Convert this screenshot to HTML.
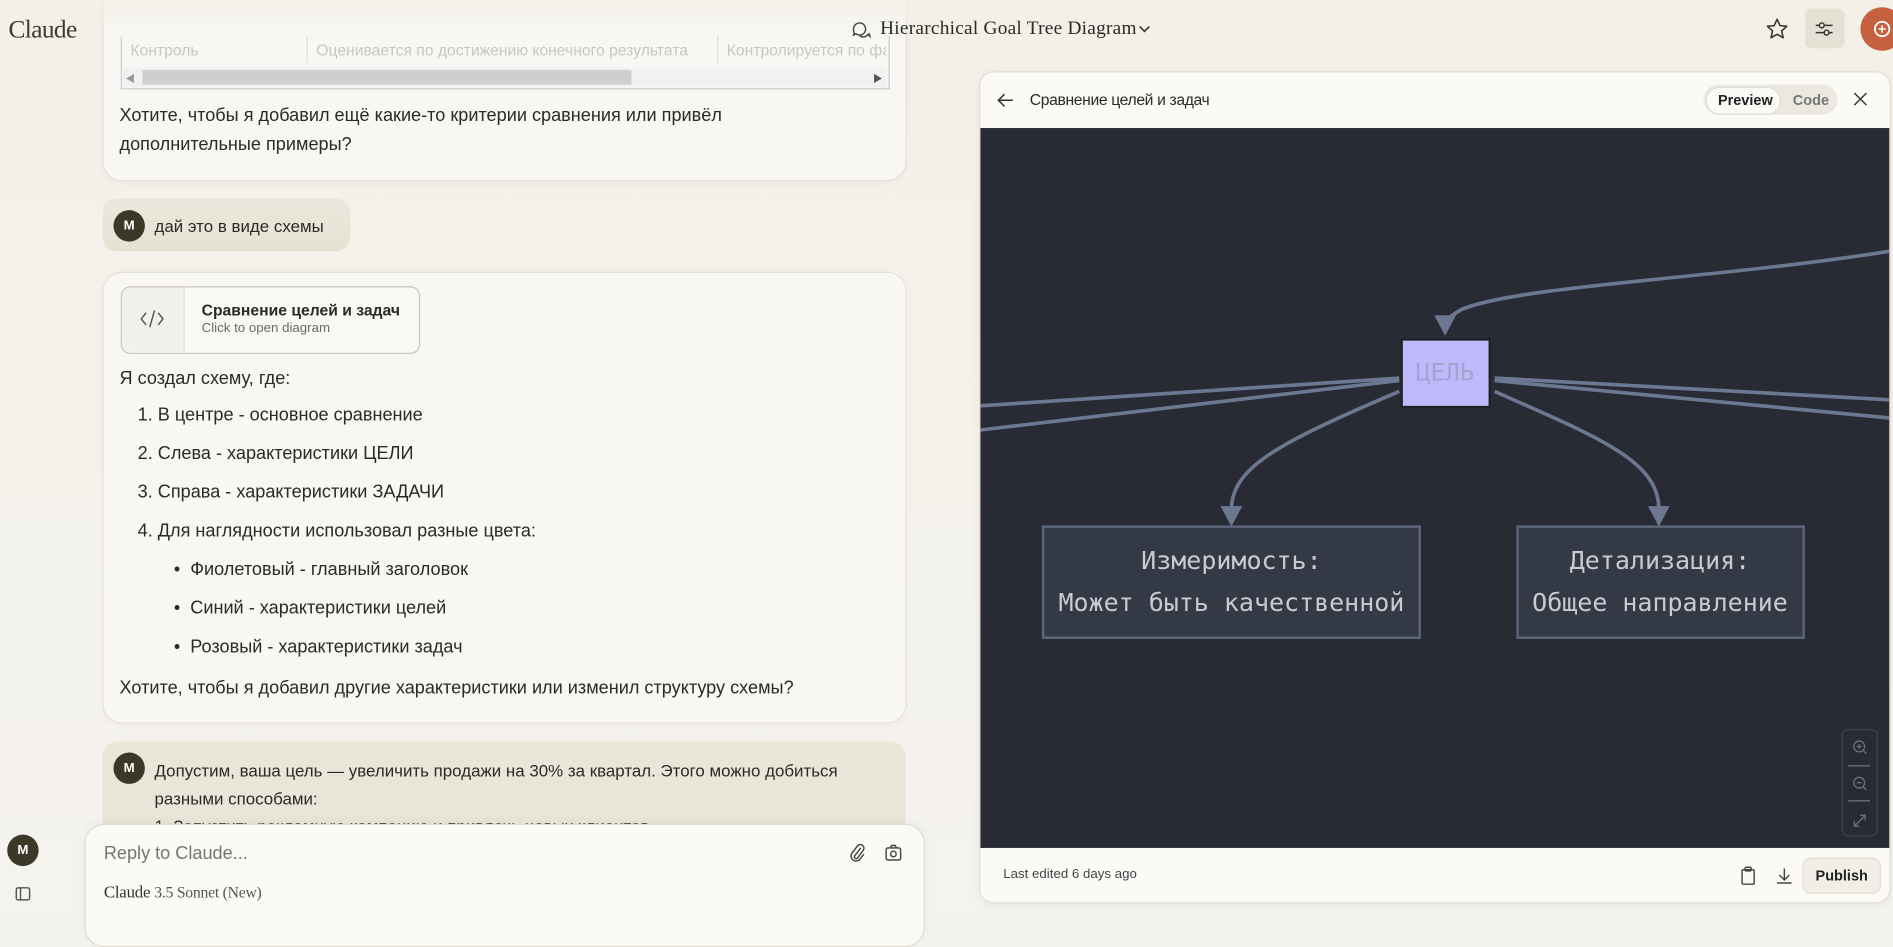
<!DOCTYPE html>
<html><head><meta charset="utf-8">
<style>
html,body{margin:0;padding:0;width:1893px;height:918px;overflow:hidden;background:#f4f2ec;}
#w{position:absolute;left:0;top:0;width:1568px;height:760px;transform:scale(1.20727,1.2079);transform-origin:0 0;font-family:"Liberation Sans","Noto Sans CJK SC",sans-serif;color:#2b2a26;background:linear-gradient(#f3f0e8,#f5f3ee);}
.a{position:absolute;}
.serif{font-family:"Liberation Serif","DejaVu Serif",serif;}
.t{font-size:15px;white-space:nowrap;}
.card{background:#f8f7f3;border:1px solid #e6e2d8;border-radius:16px;box-shadow:0 2px 6px rgba(0,0,0,0.03);}
.av{width:26px;height:26px;border-radius:13px;background:#3b3828;color:#fff;font-size:11px;font-weight:bold;text-align:center;line-height:26px;}
.z{z-index:5;}
</style></head><body><div id="w">
<!-- card 1 -->
<div class="a card" style="left:85px;top:-20px;width:664px;height:168px;"></div>
<div class="a" style="left:85px;top:0;width:666px;height:30px;background:linear-gradient(#f3f0e8,rgba(243,240,232,0))"></div>
<div class="a" style="left:100px;top:30px;width:635px;height:43px;border:1px solid #ccc;border-top:none;background:#f8f7f3"></div>
<div class="a" style="left:108px;top:34px;font-size:13px;color:#c9c7c0">Контроль</div>
<div class="a" style="left:254px;top:30px;width:1px;height:22px;background:#ddd"></div>
<div class="a" style="left:262px;top:34px;font-size:13px;color:#c9c7c0;white-space:nowrap">Оценивается по достижению конечного результата</div>
<div class="a" style="left:594px;top:30px;width:1px;height:22px;background:#ddd"></div>
<div class="a" style="left:602px;top:34px;font-size:13px;color:#c9c7c0;white-space:nowrap;width:132px;overflow:hidden">Контролируется по факту</div>
<div class="a" style="left:101px;top:56px;width:633px;height:16px;background:#f1f1f1"></div>
<div class="a" style="left:118px;top:58px;width:405px;height:12px;background:#cfcfcf"></div>
<div class="a" style="left:104px;top:60px;font-size:8px;color:#999">◀</div>
<div class="a" style="left:723px;top:60px;font-size:8px;color:#555">▶</div>
<div class="a t" style="left:99px;top:84px;line-height:24px">Хотите, чтобы я добавил ещё какие-то критерии сравнения или привёл<br>дополнительные примеры?</div>

<div class="a serif z" style="left:7px;top:12px;font-size:21px;color:#3d3a33;letter-spacing:-0.5px">Claude</div>
<svg class="a z" style="left:704px;top:16px" width="18" height="18" viewBox="0 0 18 18" fill="none" stroke="#444" stroke-width="1.2"><path d="M3 8a5 5 0 1 1 2 4l-2 1 .5-2A5 5 0 0 1 3 8z"/><path d="M8 13.5a5 5 0 0 0 7-1l1.5 1.5-.5-2.5"/></svg>
<div class="a serif z" style="left:729px;top:15px;font-size:16px;color:#2b2a26;letter-spacing:0.2px">Hierarchical Goal Tree Diagram</div>
<svg class="a z" style="left:943px;top:20px" width="10" height="8"><path d="M1 2l4 4 4-4" stroke="#333" fill="none" stroke-width="1.3"/></svg>
<svg class="a" style="left:1462px;top:14px" width="20" height="20" viewBox="0 0 20 20"><path d="M10 2l2.4 5.2 5.6.6-4.2 3.8 1.2 5.6L10 14.4 5 17.2l1.2-5.6L2 7.8l5.6-.6z" fill="none" stroke="#333" stroke-width="1.3" stroke-linejoin="round"/></svg>
<div class="a" style="left:1495px;top:7px;width:33px;height:33px;background:#e4e0d3;border-radius:6px"></div>
<svg class="a" style="left:1502px;top:15px" width="18" height="18" viewBox="0 0 18 18" stroke="#333" fill="none" stroke-width="1.2"><path d="M2 6h14M2 12h14"/><circle cx="7" cy="6" r="2" fill="#e4e0d3"/><circle cx="11" cy="12" r="2" fill="#e4e0d3"/></svg>
<div class="a" style="left:1541px;top:6px;width:36px;height:36px;border-radius:18px;background:#c6613f"></div>
<svg class="a" style="left:1550px;top:15px" width="18" height="18"><circle cx="9" cy="9" r="6" stroke="#fff" fill="none" stroke-width="1.5"/><path d="M9 6v6M6 9h6" stroke="#fff" stroke-width="1.3"/></svg>

<!-- user msg -->
<div class="a" style="left:85px;top:164px;width:205px;height:44px;border-radius:12px;background:linear-gradient(#ebe7dc,#e6e1d3)"></div>
<div class="a av" style="left:94px;top:174px">M</div>
<div class="a" style="left:128px;top:179px;font-size:14px;color:#2b2a26">дай это в виде схемы</div>

<!-- card 2 -->
<div class="a card" style="left:85px;top:225px;width:664px;height:372px;"></div>
<div class="a" style="left:100px;top:237px;width:246px;height:54px;border:1px solid #c9c5ba;border-radius:8px;background:#f9f8f4"></div>
<div class="a" style="left:101px;top:238px;width:51px;height:53px;border-right:1px solid #ddd9cf;background:#f2f0ea;border-radius:8px 0 0 8px"></div>
<svg class="a" style="left:115px;top:254px" width="22" height="20" viewBox="0 0 22 20" stroke="#555" fill="none" stroke-width="1.2"><path d="M6 5l-4 5 4 5M16 5l4 5-4 5M13 3l-4 14"/></svg>
<div class="a" style="left:167px;top:249px;font-size:13px;font-weight:bold">Сравнение целей и задач</div>
<div class="a" style="left:167px;top:266px;font-size:11px;color:#6d6a60">Click to open diagram</div>
<div class="a t" style="left:99px;top:305px">Я создал схему, где:</div>
<div class="a t" style="left:114px;top:335px">1. В центре - основное сравнение</div>
<div class="a t" style="left:114px;top:367px">2. Слева - характеристики ЦЕЛИ</div>
<div class="a t" style="left:114px;top:399px">3. Справа - характеристики ЗАДАЧИ</div>
<div class="a t" style="left:114px;top:431px">4. Для наглядности использовал разные цвета:</div>
<div class="a t" style="left:144px;top:463px">•&nbsp;&nbsp;Фиолетовый - главный заголовок</div>
<div class="a t" style="left:144px;top:495px">•&nbsp;&nbsp;Синий - характеристики целей</div>
<div class="a t" style="left:144px;top:527px">•&nbsp;&nbsp;Розовый - характеристики задач</div>
<div class="a t" style="left:99px;top:561px">Хотите, чтобы я добавил другие характеристики или изменил структуру схемы?</div>

<!-- user msg 2 -->
<div class="a" style="left:85px;top:614px;width:665px;height:90px;border-radius:12px;background:#e9e5d9"></div>
<div class="a av" style="left:94px;top:623px">M</div>
<div class="a" style="left:128px;top:627px;font-size:14px;line-height:23px;white-space:nowrap">Допустим, ваша цель — увеличить продажи на 30% за квартал. Этого можно добиться<br>разными способами:<br>1. Запустить рекламную кампанию и привлечь новых клиентов</div>

<!-- input -->
<div class="a" style="left:70px;top:682px;width:694px;height:100px;background:#fbfaf7;border:1px solid #e0dcd2;border-radius:16px;box-shadow:0 -2px 8px rgba(0,0,0,0.04)"></div>
<div class="a" style="left:86px;top:698px;font-size:15px;color:#77756e">Reply to Claude...</div>
<svg class="a" style="left:702px;top:697px" width="16" height="18" viewBox="0 0 16 18" stroke="#444" fill="none" stroke-width="1.2"><path d="M11 5l-5 6.5a1.5 1.5 0 0 0 2.4 1.8L13 7a3 3 0 0 0-4.8-3.6L3.5 9.5a4.2 4.2 0 0 0 6.7 5l3.3-4.3"/></svg>
<svg class="a" style="left:732px;top:698px" width="16" height="16" viewBox="0 0 16 16" stroke="#444" fill="none" stroke-width="1.2"><rect x="2" y="4" width="12" height="10" rx="1.5"/><path d="M5.5 4l1-2h3l1 2"/><circle cx="8" cy="9" r="2.3"/></svg>
<div class="a serif" style="left:86px;top:731px;font-size:14px;color:#333;letter-spacing:-0.2px">Claude <span style="font-size:13px;color:#555">3.5 Sonnet (New)</span></div>
<div class="a av" style="left:6px;top:691px">M</div>
<svg class="a" style="left:12px;top:733px" width="14" height="14" stroke="#555" fill="none" stroke-width="1.2"><rect x="1.5" y="2" width="11" height="10" rx="1.5"/><path d="M5 2v10"/></svg>

<!-- right panel -->
<div class="a" style="left:811px;top:59px;width:753px;height:687px;background:#fbfaf7;border:1px solid #e3dfd5;border-radius:12px;overflow:hidden;box-shadow:0 2px 8px rgba(0,0,0,0.05)">
<svg class="a" style="left:13px;top:16px" width="16" height="14" stroke="#333" fill="none" stroke-width="1.3"><path d="M14 7H2M7 2L2 7l5 5"/></svg>
<div class="a" style="left:41px;top:15px;font-size:13px;color:#2b2a26;letter-spacing:-0.3px">Сравнение целей и задач</div>
<div class="a" style="left:599px;top:10px;width:111px;height:25px;background:#ebe8df;border-radius:13px"></div>
<div class="a" style="left:601px;top:12px;width:60px;height:21px;background:#fbfaf7;border-radius:11px;border:1px solid #ddd"></div>
<div class="a" style="left:611px;top:16px;font-size:12px;font-weight:bold;color:#222">Preview</div>
<div class="a" style="left:673px;top:16px;font-size:12px;font-weight:bold;color:#777">Code</div>
<svg class="a" style="left:723px;top:16px" width="12" height="12" stroke="#444" stroke-width="1.3"><path d="M1 1l10 10M11 1L1 11"/></svg>
<div class="a" style="left:0;top:46px;width:753px;height:596px;background:#282b34"></div>
<svg class="a" style="left:0;top:46px" width="753" height="596" viewBox="811 105 753 596">
<g stroke="#6c7791" stroke-width="3" fill="none">
<path d="M1564 207 C1420 230 1260 235 1210 255 Q1197 262 1196 268"/>
<path d="M1158 312 L811 335"/>
<path d="M1158 314 L811 355"/>
<path d="M1237 312 L1564 330"/>
<path d="M1237 314 L1564 345"/>
<path d="M1158 323 C1060 365 1020 385 1019 420"/>
<path d="M1237 323 C1320 360 1373 380 1373 420"/>
</g>
<g fill="#6c7791"><path d="M1187 260 L1205 260 L1196 277z"/><path d="M1010 418 L1028 418 L1019 435z"/><path d="M1364 418 L1382 418 L1373 435z"/></g>
<rect x="1160" y="280" width="73" height="56" fill="#bdb9fb" stroke="#202228" stroke-width="2"/>
<text x="1196" y="314" font-family="DejaVu Sans Mono,monospace" font-size="20" fill="#a5a3cf" text-anchor="middle">ЦЕЛЬ</text>
<rect x="863" y="435" width="312" height="92" fill="#343946" stroke="#5c6579" stroke-width="2"/>
<text x="1019" y="470" font-family="DejaVu Sans Mono,monospace" font-size="20.7" fill="#c9cbd1" text-anchor="middle">Измеримость:</text>
<text x="1019" y="505" font-family="DejaVu Sans Mono,monospace" font-size="20.7" fill="#c9cbd1" text-anchor="middle">Может быть качественной</text>
<rect x="1256" y="435" width="237" height="92" fill="#343946" stroke="#5c6579" stroke-width="2"/>
<text x="1374" y="470" font-family="DejaVu Sans Mono,monospace" font-size="20.7" fill="#c9cbd1" text-anchor="middle">Детализация:</text>
<text x="1374" y="505" font-family="DejaVu Sans Mono,monospace" font-size="20.7" fill="#c9cbd1" text-anchor="middle">Общее направление</text>
<rect x="1525" y="603" width="29" height="88" rx="5" fill="#282b34" stroke="#3e4350"/>
<g stroke="#6a7080" fill="none" stroke-width="1.1"><circle cx="1539" cy="617" r="4.5"/><path d="M1542 620l3 3M1537 617h4M1539 615v4"/><path d="M1530 633h18M1530 662h18"/><circle cx="1539" cy="647" r="4.5"/><path d="M1542 650l3 3M1537 647h4"/><path d="M1535 683l9-9M1535 679v4h4M1544 678v-4h-4"/></g>
</svg>
<div class="a" style="left:19px;top:658px;font-size:11px;color:#444">Last edited 6 days ago</div>
<svg class="a" style="left:629px;top:657px" width="14" height="16" stroke="#444" fill="none" stroke-width="1.2"><rect x="2" y="3" width="10" height="12" rx="1"/><rect x="4.5" y="1" width="5" height="3" rx="1"/></svg>
<svg class="a" style="left:659px;top:657px" width="14" height="16" stroke="#444" fill="none" stroke-width="1.2"><path d="M7 2v9M3 7.5l4 4 4-4M1 14h12"/></svg>
<div class="a" style="left:681px;top:650px;width:63px;height:28px;background:#f1eee6;border:1px solid #e0dcd2;border-radius:7px;text-align:center;line-height:28px;font-size:12px;font-weight:bold;color:#222">Publish</div>
</div>
</div></body></html>
